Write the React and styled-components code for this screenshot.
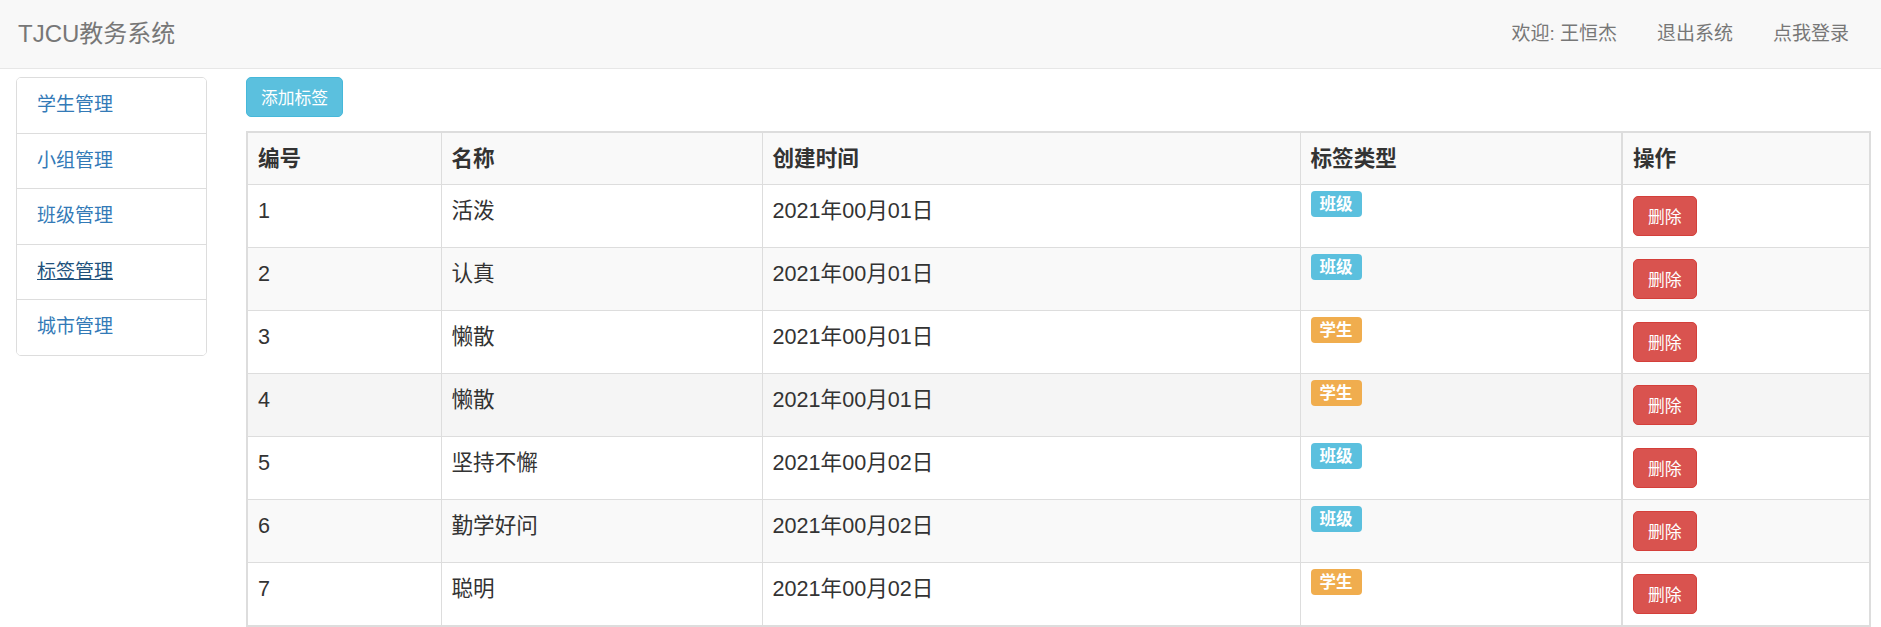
import styled, { createGlobalStyle } from "styled-components";

const GlobalStyle = createGlobalStyle`
  body {
    margin: 0;
    background: #fff;
    color: #333;
    font-family: "Liberation Sans", "Noto Sans CJK SC", sans-serif;
  }
`;

const menu = ["学生管理", "小组管理", "班级管理", "标签管理", "城市管理"];

const tags = [
  { id: 1, name: "活泼", created: "2021年00月01日", kind: "班级" },
  { id: 2, name: "认真", created: "2021年00月01日", kind: "班级" },
  { id: 3, name: "懒散", created: "2021年00月01日", kind: "学生" },
  { id: 4, name: "懒散", created: "2021年00月01日", kind: "学生" },
  { id: 5, name: "坚持不懈", created: "2021年00月02日", kind: "班级" },
  { id: 6, name: "勤学好问", created: "2021年00月02日", kind: "班级" },
  { id: 7, name: "聪明", created: "2021年00月02日", kind: "学生" },
];

// row 4 carries the hover shade, even rows the stripe
const rowTone = (i) => (i === 3 ? "#f5f5f5" : i % 2 === 1 ? "#f9f9f9" : "#fff");

export default function App() {
  return (
    <>
      <GlobalStyle />
      <Navbar>
        <Brand>TJCU教务系统</Brand>
        <NavLinks>
          <NavLink>欢迎: 王恒杰</NavLink>
          <NavLink>退出系统</NavLink>
          <NavLink>点我登录</NavLink>
        </NavLinks>
      </Navbar>
      <Page>
        <Sidebar>
          {menu.map((m) => (
            <MenuItem key={m} active={m === "标签管理"}>
              <span>{m}</span>
            </MenuItem>
          ))}
        </Sidebar>
        <Main>
          <AddButton>添加标签</AddButton>
          <Table>
            <colgroup>
              <col style={{ width: 194 }} />
              <col style={{ width: 321 }} />
              <col style={{ width: 538 }} />
              <col style={{ width: 322 }} />
              <col />
            </colgroup>
            <tbody>
              <HeadRow>
                <Th>编号</Th>
                <Th>名称</Th>
                <Th>创建时间</Th>
                <Th>标签类型</Th>
                <Th>操作</Th>
              </HeadRow>
              {tags.map((t, i) => (
                <Row key={t.id} bg={rowTone(i)}>
                  <Td>{t.id}</Td>
                  <Td>{t.name}</Td>
                  <Td>{t.created}</Td>
                  <Td>
                    <Label kind={t.kind}>{t.kind}</Label>
                  </Td>
                  <Td>
                    <DeleteButton>删除</DeleteButton>
                  </Td>
                </Row>
              ))}
            </tbody>
          </Table>
        </Main>
      </Page>
    </>
  );
}

const Navbar = styled.div`
  height: 68px;
  background: #f8f8f8;
  border-bottom: 1px solid #e7e7e7;
  display: flex;
  align-items: center;
  justify-content: space-between;
  padding: 0 12px 0 18px;
`;

const Brand = styled.div`
  font-size: 24px;
  color: #777;
  line-height: 30px;
`;

const NavLinks = styled.div`
  display: flex;
`;

const NavLink = styled.div`
  font-size: 19px;
  color: #777;
  padding: 0 20px;
  line-height: 28px;
`;

const Page = styled.div`
  display: flex;
  align-items: flex-start;
  padding: 8px 10px 0 16px;
`;

const Sidebar = styled.div`
  width: 189px;
  flex: none;
  margin-right: 39px;
  border: 1px solid #ddd;
  border-radius: 5px;
  overflow: hidden;
`;

const MenuItem = styled.div`
  padding: 13px 20px;
  line-height: 28.5px;
  font-size: 19px;
  background: #fff;
  color: ${(p) => (p.active ? "#23527c" : "#337ab7")};
  border-bottom: 1px solid #ddd;
  &:last-child {
    border-bottom: none;
  }
  span {
    text-decoration: ${(p) => (p.active ? "underline" : "none")};
  }
`;

const Main = styled.div`
  flex: 1;
  min-width: 0;
`;

const AddButton = styled.button`
  display: block;
  height: 40px;
  padding: 0 14px;
  font-family: inherit;
  font-size: 16.8px;
  color: #fff;
  background: #5bc0de;
  border: 1px solid #46b8da;
  border-radius: 5px;
  cursor: pointer;
`;

const Table = styled.table`
  margin-top: 14px;
  width: 100%;
  table-layout: fixed;
  border-collapse: collapse;
  border: 2px solid #ddd;
  font-size: 21.6px;
`;

const HeadRow = styled.tr`
  background: #f9f9f9;
`;

const Row = styled.tr`
  background: ${(p) => p.bg};
`;

const Th = styled.td`
  border: 1px solid #ddd;
  padding: 10px;
  line-height: 31px;
  font-weight: bold;
  text-align: left;
  vertical-align: top;
  &:last-child {
    border-left-width: 2px;
  }
`;

const Td = styled.td`
  border: 1px solid #ddd;
  padding: 10px;
  line-height: 31px;
  vertical-align: top;
  height: 42px;
  &:last-child {
    border-left-width: 2px;
  }
`;

const Label = styled.span`
  display: inline-block;
  vertical-align: top;
  margin-top: -4px;
  height: 26px;
  line-height: 26px;
  padding: 0 9px;
  font-size: 16.5px;
  font-weight: bold;
  color: #fff;
  border-radius: 4px;
  background: ${(p) => (p.kind === "学生" ? "#f0ad4e" : "#5bc0de")};
`;

const DeleteButton = styled.button`
  display: block;
  margin-top: 1px;
  height: 40px;
  padding: 0 14px;
  font-family: inherit;
  font-size: 16.8px;
  color: #fff;
  background: #d9534f;
  border: 1px solid #d43f3a;
  border-radius: 5px;
  cursor: pointer;
`;
